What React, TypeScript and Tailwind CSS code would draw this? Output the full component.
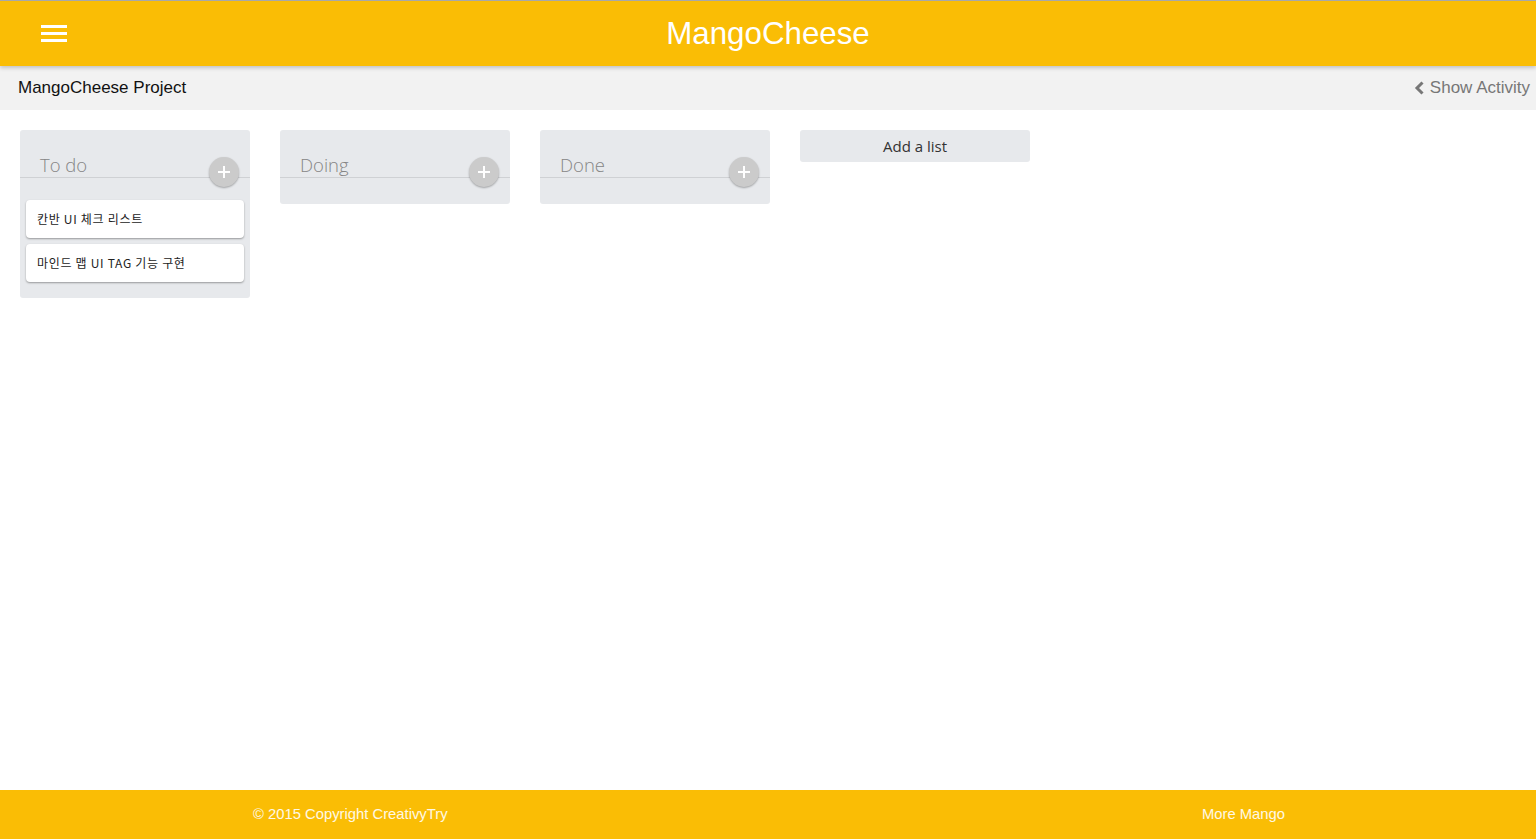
const lists = [
  { title: "To do", cards: ["칸반 UI 체크 리스트", "마인드 맵 UI TAG 기능 구현"] },
  { title: "Doing", cards: [] as string[] },
  { title: "Done", cards: [] as string[] },
];

function KanbanList({ title, cards }: { title: string; cards: string[] }) {
  return (
    <div className="w-[230px] shrink-0 rounded-[3px] bg-[#e7e9ec]">
      <div className="relative h-[48px] border-b border-[#cfd1d4] pl-5 pt-[24px]">
        <h3 className="font-['Open_Sans',sans-serif] text-[18.5px] font-light leading-[22px] text-[#858585]">
          {title}
        </h3>
        <button className="absolute right-[11px] top-[27px] flex h-[30px] w-[30px] items-center justify-center rounded-full bg-[#cbcbcb] shadow-[0_1px_2px_rgba(0,0,0,0.3)]">
          <svg width="14" height="14" viewBox="0 0 14 14">
            <path d="M7 1v12M1 7h12" stroke="#fff" strokeWidth="2" />
          </svg>
        </button>
      </div>
      {cards.length > 0 ? (
        <div className="flex flex-col gap-[6px] px-[6px] pb-[16px] pt-[22px]">
          {cards.map((c) => (
            <div
              key={c}
              className="flex h-[38px] items-center rounded-[4px] bg-white pl-[11px] font-['Noto_Sans_CJK_KR',sans-serif] text-[12px] tracking-[0.7px] text-[#222] shadow-[0_1px_2px_rgba(0,0,0,0.35)]"
            >
              {c}
            </div>
          ))}
        </div>
      ) : (
        <div className="h-[26px]" />
      )}
    </div>
  );
}

export default function App() {
  return (
    <div className="flex min-h-screen flex-col bg-white font-['Liberation_Sans',Arial,sans-serif]">
      <header className="relative z-10 flex h-[66px] items-center border-t border-[#a8a8a8] bg-[#fabd05] shadow-[0_2px_4px_rgba(0,0,0,0.2)]">
        <button className="ml-[41px] flex w-[26px] flex-col gap-[4px]">
          <span className="h-[3px] w-full bg-white" />
          <span className="h-[3px] w-full bg-white" />
          <span className="h-[3px] w-full bg-white" />
        </button>
        <h1 className="absolute left-1/2 -translate-x-1/2 text-[31.3px] leading-none text-white">
          MangoCheese
        </h1>
      </header>

      <div className="flex h-[44px] items-center justify-between bg-[#f2f2f2] pl-[18px] pr-[6px]">
        <span className="text-[17px] text-[#111]">MangoCheese Project</span>
        <button className="flex items-center gap-[5px] text-[17px] text-[#777]">
          <svg width="11" height="14" viewBox="0 0 11 14">
            <path d="M8.5 1.5 3 7l5.5 5.5" fill="none" stroke="#777" strokeWidth="3" />
          </svg>
          Show Activity
        </button>
      </div>

      <main className="flex flex-1 items-start gap-[30px] px-5 pt-5">
        {lists.map((l) => (
          <KanbanList key={l.title} title={l.title} cards={l.cards} />
        ))}
        <button className="h-[32px] w-[230px] rounded-[3px] bg-[#e7e9ec] font-['Open_Sans',sans-serif] text-[15px] text-[#333]">
          Add a list
        </button>
      </main>

      <footer className="flex h-[49px] items-center bg-[#fabd05] text-[14.8px] text-white/90">
        <span className="pl-[253px]">© 2015 Copyright CreativyTry</span>
        <span className="ml-auto mr-[251px]">More Mango</span>
      </footer>
    </div>
  );
}
